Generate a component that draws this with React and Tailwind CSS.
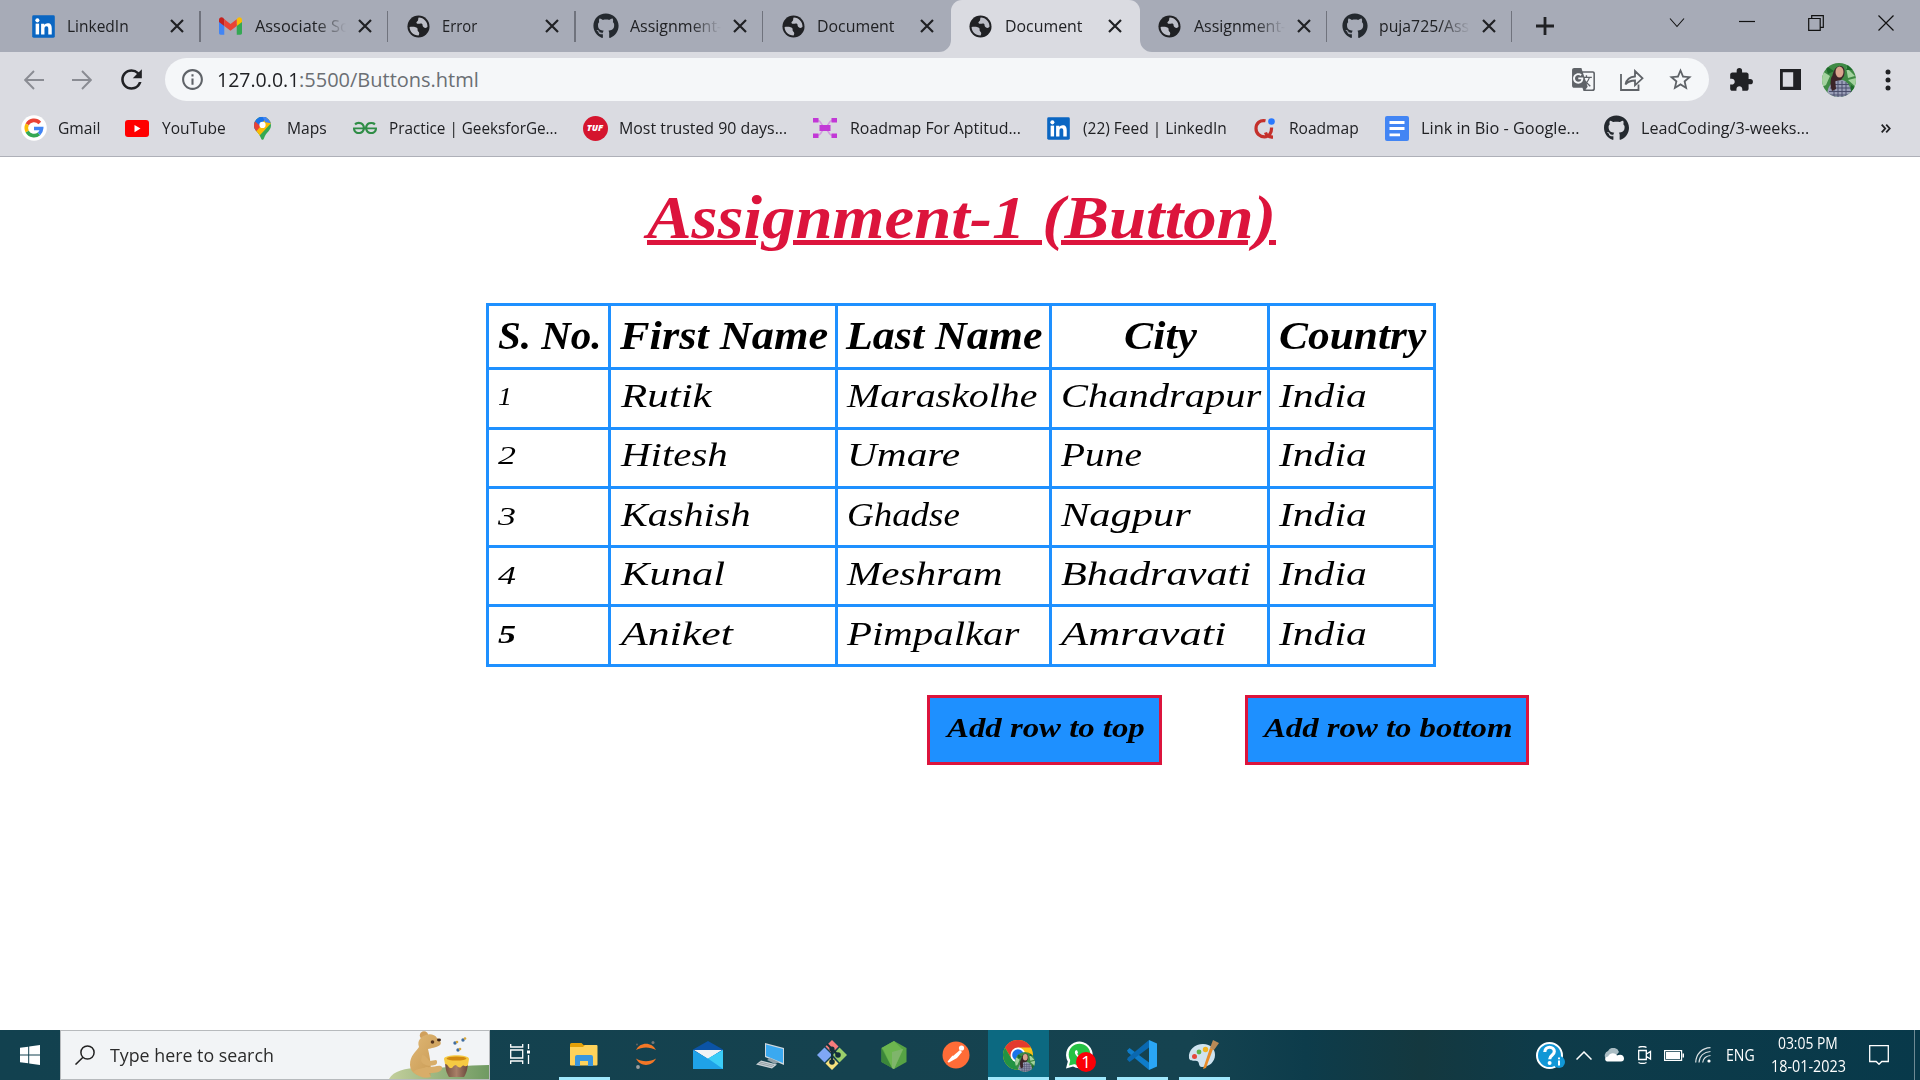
import { useLayoutEffect, useRef, useState } from "react";
import { FaGithub, FaWhatsapp } from "react-icons/fa";
import { MdExtension, MdGTranslate, MdStarBorder, MdRefresh, MdOutlineInfo } from "react-icons/md";
import { SiGeeksforgeeks } from "react-icons/si";

/* Text stretched or condensed horizontally to occupy exactly `w` pixels. */
function Fit({ w, children, className = "" }) {
  const ref = useRef(null);
  const [scale, setScale] = useState(1);
  useLayoutEffect(() => {
    setScale(w / ref.current.offsetWidth);
  }, [w]);
  return (
    <span className={"inline-block shrink-0 whitespace-nowrap " + className} style={{ width: w }}>
      <span ref={ref} className="inline-block origin-left" style={{ transform: `scaleX(${scale})` }}>
        {children}
      </span>
    </span>
  );
}

function Globe() {
  return (
    <svg viewBox="0 0 24 24" className="size-[23px]">
      <circle cx="12" cy="12" r="11.5" fill="#202124" />
      <path d="M2.700 12.500c2.700-.6 6.300-.3 7.700.9 1.500 1.300-.1 2.800 1.300 3.700 1.300.8 1.400 2.300.4 4.300C6.500 21.300 2.800 17.500 2.700 12.500z" fill="#bcbec7" />
      <path d="M12.300 2.600c5.300.2 9.300 4.600 9.100 9.700-1.100 1.700-2.900 1.300-4.300.1-1.600-1.400-.1-2.300-1.500-3.300-1.500-1-4.300 1-5.500-.6-1-1.400 1.200-1.900 1.500-3.400.2-.9-.1-1.600.7-2.500z" fill="#bcbec7" />
    </svg>
  );
}

function LinkedIn() {
  return (
    <svg viewBox="0 0 24 24" className="size-[23px]">
      <rect x=".2" y=".2" width="23.600" height="23.600" rx="1.500" fill="#0a66c2" />
      <g fill="#fff">
        <circle cx="5.600" cy="5.600" r="2.100" />
        <rect x="3.800" y="9" width="3.600" height="11.300" />
        <path d="M9.500 9h3.400v1.600c.6-1.100 1.900-1.900 3.500-1.900 3.300 0 4.200 2.200 4.200 5.200v6.400h-3.600v-5.700c0-1.400-.3-2.800-1.900-2.800-1.700 0-2.100 1.300-2.100 2.800v5.700H9.500z" />
      </g>
    </svg>
  );
}

function GmailIcon() {
  return (
    <svg viewBox="0 0 24 18" className="h-[18px] w-[23px]">
      <path d="M0 3v13.300C0 17.300.7 18 1.700 18h3.800V7z" fill="#4285f4" />
      <path d="M24 3v13.300c0 1-.7 1.700-1.700 1.700h-3.800V7z" fill="#34a853" />
      <path d="M18.500 2v7L24 4.700V2.500C24 .3 21.500-.8 19.700.5z" fill="#fbbc04" />
      <path d="M0 2.500v2.200L5.500 9V2L4.300.5C2.500-.8 0 .3 0 2.500z" fill="#c5221f" />
      <path d="M5.500 2v7l6.500 5 6.500-5V2L12 7z" fill="#ea4335" />
    </svg>
  );
}

const Github = () => <FaGithub className="size-[26px] text-[#24292f]" />;

const tabs = [
  { icon: <LinkedIn />, label: "LinkedIn", w: 62 },
  { icon: <GmailIcon />, label: "Associate So", w: 95, fade: true },
  { icon: <Globe />, label: "Error", w: 35 },
  { icon: <Github />, label: "Assignment-", w: 92, fade: true },
  { icon: <Globe />, label: "Document", w: 77 },
  { icon: <Globe />, label: "Document", w: 77, active: true },
  { icon: <Globe />, label: "Assignment-", w: 92, fade: true },
  { icon: <Github />, label: "puja725/Ass", w: 90, fade: true, last: true },
];

function Cross() {
  return (
    <svg viewBox="0 0 14 14" className="size-[14px]" stroke="#202124" strokeWidth="2.200">
      <path d="M1 1l12 12M13 1L1 13" />
    </svg>
  );
}

function Tab({ t, sep }) {
  return (
    <div
      className={
        "relative flex h-[52px] shrink-0 items-center " +
        (t.last ? "w-[185.200px] " : t.active ? "w-[189px] " : "w-[187.500px] ") +
        (t.active ? "rounded-t-[11px] bg-[#dadbe1]" : "")
      }
    >
      {t.active && (
        <>
          <svg className="absolute bottom-0 -left-[12px] size-[12px]" viewBox="0 0 12 12"><path d="M12 0v12H0A12 12 0 0 0 12 0z" fill="#dadbe1" /></svg>
          <svg className="absolute -right-[12px] bottom-0 size-[12px]" viewBox="0 0 12 12"><path d="M0 0v12h12A12 12 0 0 1 0 0z" fill="#dadbe1" /></svg>
        </>
      )}
      <div className={"flex w-[28px] justify-center " + (t.last ? "ml-[14px]" : "ml-[16px]")}>{t.icon}</div>
      <div
        className={
          "ml-[10px] w-[97px] text-[16.500px] leading-[26px] text-[#202124] " +
          (t.fade ? "[mask-image:linear-gradient(to_right,black_62%,transparent_94%)]" : "")
        }
      >
        <Fit w={t.w}>{t.label}</Fit>
      </div>
      <div className="ml-[6px]"><Cross /></div>
      {sep && <div className="ml-auto h-[31px] w-[1.500px] bg-[#70737d]" />}
    </div>
  );
}

function TabStrip() {
  return (
    <div className="flex h-[52px] bg-[#a7abb7] pl-[13px]">
      {tabs.map((t, i) => (
        <Tab key={i} t={t} sep={i !== 4 && i !== 5} />
      ))}
      <svg viewBox="0 0 18 18" className="mt-[17px] ml-[24px] size-[18px]" stroke="#202124" strokeWidth="2.800"><path d="M9 0v18M0 9h18" /></svg>
      <div className="mt-[15px] ml-auto flex h-[16px] w-[251px] justify-between pr-[26px]">
        <svg viewBox="0 0 16 16" className="size-[16px]" fill="none" stroke="#111" strokeWidth="1.100"><path d="M1 3.500l7 8 7-8" /></svg>
        <svg viewBox="0 0 16 16" className="size-[16px]" stroke="#111" strokeWidth="1.200"><path d="M0 6.500h16" /></svg>
        <svg viewBox="0 0 16 16" className="size-[16px]" fill="none" stroke="#111" strokeWidth="1.200"><path d="M.7 3.500h11.500v11.800H.7zM3.700 3.500V.7h11.600v11.600h-3.100" /></svg>
        <svg viewBox="0 0 16 16" className="size-[16px]" stroke="#111" strokeWidth="1.200"><path d="M.5.500l15 15M15.500.5l-15 15" /></svg>
      </div>
    </div>
  );
}

function AvatarArt({ className }) {
  return (
    <svg viewBox="0 0 34 34" className={className}>
      <clipPath id="av"><circle cx="17" cy="17" r="17" /></clipPath>
      <g clipPath="url(#av)">
        <rect width="34" height="34" fill="#3f8a45" />
        <path d="M0 8l8 5-4 9-4 2zM24 4l9 9-7 2zM26 17l8-2v9z" fill="#a3d29e" />
        <path d="M3 2l9 6-6 3zM26 0l7 7-9 0zM29 22l5 3-6 5z" fill="#1d6b2a" />
        <path d="M10 30c-2-9 0-23 5-26 6-3 9 2 7 9l-3 4-4 2-2 12z" fill="#3b2428" />
        <ellipse cx="17.500" cy="9" rx="4" ry="5.500" fill="#d9a58e" />
        <path d="M5 34c0-9 3-14 9-16l6-1c6 1 9 7 10 17z" fill="#9a9fb8" />
        <path d="M9 21.500h18M8 25h21M7 28.500h23M7 32h23M12 19v15M16 18v16M20 18v16M24 19v15" stroke="#4b4f6c" strokeWidth="1" />
        <path d="M10 13c-2 4-2 10 0 15l4-2-1-11z" fill="#3b2428" />
      </g>
    </svg>
  );
}

function AddressBar() {
  return (
    <div className="flex h-[55px] items-center bg-[#dadbe1]">
      <svg viewBox="0 0 20 20" className="ml-[24px] size-[20px]" fill="none" stroke="#8a8c93" strokeWidth="1.900"><path d="M20 10H1.500M10 1L1.200 10l8.800 9" /></svg>
      <svg viewBox="0 0 20 20" className="ml-[28px] size-[20px]" fill="none" stroke="#8a8c93" strokeWidth="1.900"><path d="M0 10h18.500M10 1l8.800 9-8.800 9" /></svg>
      <MdRefresh className="ml-[24px] size-[31px] text-[#202124]" />
      <div className="ml-[18px] flex h-[43px] w-[1544px] items-center rounded-full bg-[#f5f7f9]">
        <MdOutlineInfo className="ml-[15px] size-[25px] text-[#5f6368]" />
        <div className="ml-[12px] flex text-[20px] leading-[30px]">
          <Fit w={82} className="text-[#202124]">127.0.0.1</Fit>
          <Fit w={180} className="text-[#6b6f74]">:5500/Buttons.html</Fit>
        </div>
        <MdGTranslate className="ml-auto size-[25px] text-[#5f6368]" />
        <svg viewBox="0 0 24 22" className="ml-[24px] h-[22px] w-[24px]" fill="none" stroke="#5f6368" strokeWidth="1.800">
          <path d="M1 5v16h17.500v-5.500M5.500 15.500c1-5 4-7.700 9.500-8V2l7.500 7.300-7.500 7v-4.800c-4.200 0-7 1-9.500 4z" />
        </svg>
        <MdStarBorder className="mr-[15px] ml-[23px] size-[27px] text-[#5f6368]" />
      </div>
      <MdExtension className="ml-[19px] size-[26px] text-[#202124]" />
      <svg viewBox="0 0 21 21" className="ml-[26px] size-[21px]"><path fillRule="evenodd" d="M0 0h21v21H0zM2.800 3.200v14.600h10.400V3.200z" fill="#202124" /></svg>
      <AvatarArt className="ml-[21px] size-[34px]" />
      <svg viewBox="0 0 6 22" className="ml-[29px] h-[22px] w-[6px]" fill="#202124"><circle cx="3" cy="3" r="2.500" /><circle cx="3" cy="11" r="2.500" /><circle cx="3" cy="19" r="2.500" /></svg>
    </div>
  );
}

const GoogleIcon = () => (
  <svg viewBox="0 0 26 26" className="size-[26px]">
    <circle cx="13" cy="13" r="12.800" fill="#fff" />
    <g fill="none" strokeWidth="3.600">
      <path d="M18.800 8A7.700 7.700 0 0 0 6.200 9.400" stroke="#ea4335" />
      <path d="M6.200 9.400a7.700 7.700 0 0 0 0 7.200" stroke="#fbbc05" />
      <path d="M6.200 16.600A7.700 7.700 0 0 0 18 18.800" stroke="#34a853" />
      <path d="M18 18.800a7.700 7.700 0 0 0 2.600-5.300H13" stroke="#4285f4" />
    </g>
  </svg>
);
const YoutubeIcon = () => (
  <svg viewBox="0 0 24 17" className="h-[17px] w-[24px]"><rect width="24" height="17" rx="3" fill="#f00" /><path d="M9.500 5v7.200l6-3.600z" fill="#fff" /></svg>
);
const MapsIcon = () => (
  <svg viewBox="0 0 18 25" className="h-[25px] w-[18px]">
    <clipPath id="pin"><path d="M9 0a9 9 0 0 1 9 9c0 6-5.500 7.500-7.500 14-.5 2-2.500 2-3 0C5.500 16.500 0 15 0 9a9 9 0 0 1 9-9z" /></clipPath>
    <g clipPath="url(#pin)">
      <rect width="18" height="25" fill="#34a853" />
      <path d="M0 15L13 0h5v7L4 22z" fill="#fbbc04" />
      <path d="M0 0h14L2 15H0z" fill="#1a73e8" />
      <path d="M0 4l7 6-5 6H0z" fill="#ea4335" />
      <path d="M9 0h9v7l-6-1z" fill="#4285f4" />
      <circle cx="9" cy="8.700" r="3.300" fill="#fff" />
    </g>
  </svg>
);
const TufIcon = () => (
  <span className="flex size-[25px] items-center justify-center rounded-full bg-[#d5152e] text-[9px] font-extrabold text-white italic">TUF</span>
);
const NodesIcon = () => (
  <svg viewBox="0 0 24 20" className="h-[20px] w-[24px]">
    <path d="M4 2c5 1 5 7 8 8 3-1 3-7 8-8M4 18c5-1 5-7 8-8 3 1 3 7 8 8" fill="none" stroke="#d29adf" strokeWidth="1.500" />
    <path d="M0 0h5.500v4.500H0zM18.500 0H24v4.500h-5.500zM0 15.500h5.500V20H0zM18.500 15.500H24V20h-5.500zM6.500 7h11v6h-11z" fill="#c238d6" />
  </svg>
);
const RoadmapIcon = () => (
  <svg viewBox="0 0 21 21" className="size-[21px]"><path d="M11.500 2.800C6 1.500 2 5.500 2 10.500c0 5 3.800 8.300 8.500 8.300 4.500 0 7.300-3.500 7-9.300M11.500 14.500c1 3 4 4.700 7.500 4.700" fill="none" stroke="#c4302b" strokeWidth="3.200" /><circle cx="17.500" cy="3.500" r="3.300" fill="#2979ff" /></svg>
);
const DocsIcon = () => (
  <svg viewBox="0 0 24 25" className="h-[25px] w-[24px]"><rect width="24" height="25" rx="2" fill="#4285f4" /><path d="M4.500 6.500h15M4.500 12.500h15M4.500 18.800h10.500" stroke="#fff" strokeWidth="2.800" /></svg>
);

const bookmarks = [
  { icon: <GoogleIcon />, ml: 20.5, iw: 26, gap: 11.5, label: "Gmail", w: 42 },
  { icon: <YoutubeIcon />, ml: 25, iw: 24, gap: 13, label: "YouTube", w: 64 },
  { icon: <MapsIcon />, ml: 28, iw: 17, gap: 16, label: "Maps", w: 40 },
  { icon: <SiGeeksforgeeks className="size-[24px] text-[#2f8d46]" />, ml: 26, iw: 24, gap: 12, label: "Practice | GeeksforGe...", w: 169 },
  { icon: <TufIcon />, ml: 24.5, iw: 25, gap: 11.5, label: "Most trusted 90 days...", w: 168 },
  { icon: <NodesIcon />, ml: 25.5, iw: 24, gap: 13, label: "Roadmap For Aptitud...", w: 171 },
  { icon: <LinkedIn />, ml: 26, iw: 23, gap: 13, label: "(22) Feed | LinkedIn", w: 144 },
  { icon: <RoadmapIcon />, ml: 27.5, iw: 21, gap: 13.5, label: "Roadmap", w: 70 },
  { icon: <DocsIcon />, ml: 26, iw: 24, gap: 12, label: "Link in Bio - Google...", w: 158 },
  { icon: <Github />, ml: 25, iw: 25, gap: 12, label: "LeadCoding/3-weeks...", w: 168 },
];

function Bookmarks() {
  return (
    <div className="flex h-[50px] items-center border-b-[1.500px] border-[#aeb0b8] bg-[#dadbe1] pb-[7px]">
      {bookmarks.map((b) => (
        <div key={b.label} className="flex shrink-0 items-center" style={{ marginLeft: b.ml }}>
          <div className="flex shrink-0 items-center justify-center" style={{ width: b.iw, marginRight: b.gap }}>{b.icon}</div>
          <Fit w={b.w} className="text-[16px] leading-[24px] text-[#202124]">{b.label}</Fit>
        </div>
      ))}
      <svg viewBox="0 0 10 9" className="mr-[29px] ml-auto h-[9px] w-[10px]" fill="none" stroke="#202124" strokeWidth="1.800"><path d="M.7.700l3.500 3.800L.7 8.300M5.200.700l3.500 3.800-3.500 3.800" /></svg>
    </div>
  );
}

const headers = [["S. No.", 104, 9], ["First Name", 208, 9], ["Last Name", 196, 8], ["City", 73, 72], ["Country", 147, 9]];
const rows = [
  ["1", ["Rutik", 91], ["Maraskolhe", 190], ["Chandrapur", 200]],
  ["2", ["Hitesh", 107], ["Umare", 113], ["Pune", 81]],
  ["3", ["Kashish", 130], ["Ghadse", 113], ["Nagpur", 130]],
  ["4", ["Kunal", 104], ["Meshram", 155], ["Bhadravati", 190]],
  ["5", ["Aniket", 112], ["Pimpalkar", 173], ["Amravati", 166]],
];
const heights = ["h-[60px]", "h-[59px]", "h-[59px]", "h-[59px]", "h-[60px]"];
const lower = { 3: true, 4: true, 5: true };
const cell = "flex items-center border-r-[3px] border-b-[3px] border-[#1e90ff] ";
const columns = "grid grid-cols-[122px_227px_214px_218px_166px] ";

function PeopleTable() {
  return (
    <div className="ml-[486px] w-[950px] border-t-[3px] border-l-[3px] border-[#1e90ff] text-black italic">
      <div className={columns + "h-[64px] text-[39px] leading-[44px] font-bold"}>
        {headers.map(([h, w, pl]) => (
          <div key={h} className={cell + "pb-[1px]"} style={{ paddingLeft: pl }}><Fit w={w}>{h}</Fit></div>
        ))}
      </div>
      {rows.map(([n, f, l, c], i) => {
        const c2 = cell + (i < 2 ? "pb-[6px] " : "pb-[4px] ");
        return (
          <div key={n} className={columns + heights[i] + " text-[34px] leading-[40px]"}>
            <div className={cell + "pl-[9px] text-[26px] " + (lower[n] ? "pb-[1px]" : "pb-[4px]") + (n === "5" ? " font-bold" : "")}>
              <Fit w={n === "1" ? 14 : 18}>{n}</Fit>
            </div>
            <div className={c2 + "pl-[10px]"}><Fit w={f[1]}>{f[0]}</Fit></div>
            <div className={c2 + "pl-[9px]"}><Fit w={l[1]}>{l[0]}</Fit></div>
            <div className={c2 + "pl-[9px]"}><Fit w={c[1]}>{c[0]}</Fit></div>
            <div className={c2 + "pl-[9px]"}><Fit w={88}>India</Fit></div>
          </div>
        );
      })}
    </div>
  );
}

function Page() {
  return (
    <main className="h-[873px] bg-white font-['Liberation_Serif',serif]">
      <h1 className="ml-[647px] pt-[15px] text-[62px] leading-[90px] font-bold text-[#dc143c] italic">
        <Fit w={629} className="h-[72px] align-top">
          <span className="underline decoration-[5px] underline-offset-[2px]">Assignment-1 (Button)</span>
        </Fit>
      </h1>
      <div className="pt-[41px]"><PeopleTable /></div>
      <div className="mt-[28px] ml-[927px] flex gap-[83px] text-[28px] leading-[36px] font-bold text-black italic">
        <button className="flex h-[70px] w-[235px] items-center justify-center border-[3px] border-[#dc143c] bg-[#1e90ff] pb-[4px] pl-[2px]">
          <Fit w={198} className="text-left">Add row to top</Fit>
        </button>
        <button className="flex h-[70px] w-[284px] items-center justify-center border-[3px] border-[#dc143c] bg-[#1e90ff] pb-[4px] pl-[2px]">
          <Fit w={248} className="text-left">Add row to bottom</Fit>
        </button>
      </div>
    </main>
  );
}

function Bear() {
  return (
    <svg viewBox="0 0 100 48" className="mt-auto ml-auto h-[48px] w-[100px]">
      <defs>
        <linearGradient id="hill" x1="0" x2="1"><stop offset="0" stopColor="#c3cf9c" /><stop offset="1" stopColor="#6f9a62" /></linearGradient>
        <linearGradient id="fur" x1="0" x2="1" y1="0" y2="1"><stop offset="0" stopColor="#e0b876" /><stop offset="1" stopColor="#c69750" /></linearGradient>
        <linearGradient id="pot" x1="0" x2="1"><stop offset="0" stopColor="#75503f" /><stop offset=".5" stopColor="#a98068" /><stop offset="1" stopColor="#68483b" /></linearGradient>
      </defs>
      <path d="M0 48c5-9 20-12 36-11 25 0 40-3 64-3v14z" fill="url(#hill)" />
      <circle cx="35" cy="4.500" r="4.200" fill="#d0a05d" />
      <path d="M31 8c5-6 14-6 17-1 3 2 5 5 3 7-4 3-9 3-12 4 2 8 4 20 2 28-10 0-20-3-20-12 0-10 6-13 9-18-1-3-1-6 1-8z" fill="url(#fur)" />
      <path d="M33 24c4 0 6 5 8 6l6-1c2 1 1 5-1 5-6 2-12 0-14-4zM24 41c4-4 9-3 13-5 8 1 13-3 16 0 1 5-6 6-13 6l2 4c-6 2-12 0-18-5z" fill="#d8ad69" />
      <circle cx="43.500" cy="11" r="1.800" fill="#55351f" /><ellipse cx="50" cy="9" rx="2" ry="1.400" fill="#3b2418" />
      <path d="M56 30h23c0 8-2 13-4 16H60c-2-3-4-8-4-16z" fill="url(#pot)" />
      <path d="M55 28c0-5 25-5 25 0l-1 6c-3 3-4-1-6 1-2 3-4 1-6-1-3 0-3 4-6 3-2-1-2-4-5-4z" fill="#f6cb43" />
      <ellipse cx="67.500" cy="27.500" rx="10" ry="2" fill="#d18a12" />
      <g><circle cx="66" cy="12" r="1.700" fill="#3f6ca0" /><circle cx="68" cy="11" r="1.300" fill="#d8a83c" /><circle cx="74" cy="9" r="1.700" fill="#3f6ca0" /><circle cx="76" cy="7.500" r="1.300" fill="#d8a83c" /><circle cx="69" cy="19" r="1.700" fill="#3f6ca0" /><circle cx="71" cy="18" r="1.300" fill="#d8a83c" /></g>
    </svg>
  );
}

const svg30 = "size-[30px]";
const apps = [
  {
    open: true, icon: (
      <svg viewBox="0 0 30 30" className={svg30}><path d="M1 4.500Q1 3 2.500 3h10l2 2H28v20H1z" fill="#e3a008" /><path d="M1 7h13l2-2h11.500q1 0 1 1v18.500q0 1-1 1H2q-1 0-1-1z" fill="#ffd25a" /><path d="M6 26V17q0-2 2-2h14q2 0 2 2v9h-5v-5h-8v5z" fill="#3a96dd" /></svg>
    ),
  },
  {
    icon: (
      <svg viewBox="0 0 30 30" className={svg30}><path d="M5 10C9 1.500 21 1.500 25 10 19 6.500 11 6.500 5 10zM5 18.500C9 27 21 27 25 18.500c-6 3.500-14 3.500-20 0z" fill="#f37726" /><circle cx="22" cy="2.500" r="1.500" fill="#767677" /><circle cx="7" cy="27" r="1.900" fill="#9e9e9e" /><circle cx="6" cy="4.500" r="1" fill="#616262" /></svg>
    ),
  },
  {
    icon: (
      <svg viewBox="0 0 30 30" className={svg30}><path d="M0 9.500L15 1l15 8.500V15H0z" fill="#0b53a5" /><path d="M1 10h28l-14 9z" fill="#f1f3f5" /><path d="M0 10l15 8.500L30 10v19H0z" fill="#1fa2e8" /><path d="M2 10h26l-13 8.500z" fill="#f1f3f5" /><path d="M30 10v19L15 18.500z" fill="#3bcdf7" /></svg>
    ),
  },
  {
    icon: (
      <svg viewBox="0 0 30 30" className={svg30}><path d="M10 3l19 5v17L10 17z" fill="#cfd8dd" /><path d="M11 4.500L28 9v14l-17-7z" fill="#3aa9f0" /><path d="M15 18l9 4-4 2-8-4z" fill="#8fa0a8" /><path d="M6 20.500l16 4-5 4-16-4z" fill="#cbd3d7" /><path d="M5 22l14 3.500M3.500 23.300l14 3.500" stroke="#7d8a90" strokeWidth=".7" /></svg>
    ),
  },
  {
    icon: (
      <svg viewBox="0 0 30 30" className={svg30}><path d="M15 0l6.500 6.500L15 13l-6.500-6.500z" fill="#f67c7c" /><path d="M7.500 7.500L14 14v2l-6.500 6.500L0 15z" fill="#7fa7f5" /><path d="M22.500 7.500L30 15l-7.500 7.500L16 15z" fill="#9bcf6b" /><path d="M15 17l6.500 6.500L15 30l-6.500-6.500z" fill="#f7e07c" /><path d="M10 4l5 5v14M15 9l6 6" fill="none" stroke="#14303a" strokeWidth="2" /><g fill="#14303a"><circle cx="15" cy="9" r="2.600" /><circle cx="15" cy="22" r="2.800" /><circle cx="21" cy="15" r="2.800" /></g></svg>
    ),
  },
  {
    icon: (
      <svg viewBox="0 0 30 30" className={svg30}><path d="M15 1l12.500 7v14L15 29 2.500 22V8z" fill="#57a345" /><path d="M15 1L2.500 8l2 2L13 28l2 1 9-19z" fill="#6cb64f" /><path d="M2.500 8L13 28 2.500 22z" fill="#3c873a" /><path d="M13 12l11-3-9 20-2-1z" fill="#7fb56b" /></svg>
    ),
  },
  {
    icon: (
      <svg viewBox="0 0 30 30" className={svg30}><circle cx="15" cy="15" r="13.500" fill="#ff6c37" /><circle cx="20.500" cy="8" r="2.600" fill="#fff" /><path d="M19 10l2 2-5 6-8 4.500-1-.5 5-6z" fill="#fff" /><path d="M12 16l-5 6" stroke="#fff" strokeWidth="1.200" /></svg>
    ),
  },
  {
    open: true, active: true, icon: (
      <span className="relative block size-[30px]">
        <svg viewBox="0 0 30 30" className={svg30}>
          <circle cx="15" cy="15" r="15" fill="#fbc116" />
          <path d="M2 7.500A15 15 0 0 1 28 7.500H15l-6.500 11z" fill="#e33b2e" />
          <path d="M2 7.500L8.500 18.700 15 22.500h6.500L14.500 30A15 15 0 0 1 2 7.500z" fill="#229342" />
          <circle cx="15" cy="15" r="7.500" fill="#fff" /><circle cx="15" cy="15" r="5.800" fill="#1a73e8" />
        </svg>
        <AvatarArt className="absolute top-[12px] left-[12px] size-[20px]" />
      </span>
    ),
  },
  {
    open: true, icon: (
      <span className="relative block size-[30px]">
        <svg viewBox="0 0 30 30" className={svg30}><path d="M1 28.500l1.800-7A13.300 13.300 0 1 1 8 26.600z" fill="#fff" /><circle cx="14.500" cy="14.500" r="10.800" fill="#25c244" /><path d="M4 25.500l1.500-6 4.500 4.500z" fill="#25c244" /></svg>
        <FaWhatsapp className="absolute top-[4px] left-[4px] size-[21px] text-[#fff] [clip-path:circle(32%)]" />
        <span className="absolute top-[12px] left-[11px] flex size-[20px] items-center justify-center rounded-full bg-[#fb0007] text-[17px] leading-[20px] text-white">1</span>
      </span>
    ),
  },
  {
    open: true, icon: (
      <svg viewBox="0 0 30 30" className={svg30}><path d="M0 10.500L2.500 8 22 22.500V30L1 12.500z" fill="#0f7cc9" /><path d="M0 19.500L2.500 22 22 7.500V0L1 17.500z" fill="#0a68b0" /><path d="M22 0l8 3.500v23L22 30z" fill="#2aa6f5" /></svg>
    ),
  },
  {
    open: true, icon: (
      <svg viewBox="0 0 32 32" className="size-[32px]"><path d="M15 5c8 0 12 5 12 11 0 7-6 12-13 12-4 0-2-5-5-6s-7 1-8-3C0 11 7 5 15 5z" fill="#cfe3ef" /><circle cx="6.500" cy="17.500" r="2.500" fill="#e5483d" /><circle cx="11" cy="13" r="2.400" fill="#5fb34b" /><circle cx="17.500" cy="10.500" r="2.700" fill="#f0b323" /><path d="M25 10l-7 19-3 1 7-21z" fill="#e88b28" /><path d="M22 9l3-8 6 3-5 7z" fill="#b98a56" /></svg>
    ),
  },
];

function Taskbar() {
  return (
    <footer className="flex h-[50px] bg-[linear-gradient(90deg,#12414f_0%,#15424f_45%,#154350_62%,#0d3c4b_68%,#14383f_74%,#0e3b49_80%,#08394a_100%)] text-white">
      <div className="flex w-[60px] items-center justify-center">
        <svg viewBox="0 0 20 20" className="size-[20px]" fill="#fff"><path d="M0 2.800L8.200 1.700v7.800H0zM9.200 1.500L20 0v9.500H9.200zM0 10.500h8.200v7.800L0 17.200zM9.200 10.500H20V20L9.200 18.500z" /></svg>
      </div>
      <div className="flex w-[430px] items-center border border-[#b7babd] bg-[#f2f4f6] pl-[14px]">
        <svg viewBox="0 0 20 20" className="size-[20px]" fill="none" stroke="#222" strokeWidth="1.500"><circle cx="12.500" cy="7.500" r="6.600" /><path d="M8 12.200L.5 19.600" /></svg>
        <Fit w={164} className="ml-[15px] text-[19px] leading-[26px] text-[#2b2b2b]">Type here to search</Fit>
        <Bear />
      </div>
      <div className="flex w-[60px] items-center justify-center pb-[2px]">
        <svg viewBox="0 0 20 20" className="size-[20px]" fill="none" stroke="#fff" strokeWidth="1.300"><path d="M.7 0v3h12V0M.7 20v-3h12v3M.7 6h12v8H.700zM18.500 0v5M18.500 11v9" /><path d="M17 6.500h3v3h-3z" fill="#fff" stroke="none" /></svg>
      </div>
      <div className="flex pl-[3px]">
        {apps.map((a, i) => (
          <div key={i} className="flex h-[50px] w-[62px] flex-col items-center">
            <div className={"flex h-[47px] items-center justify-center pt-[3px] " + (a.active ? "w-[61px] bg-[#0c6981]" : "w-[51px]")}>{a.icon}</div>
            <div className={"h-[3px] " + (a.active ? "w-[61px] " : "w-[51px] ") + (a.open ? "bg-[#a0e8fc]" : "")} />
          </div>
        ))}
      </div>
      <div className="ml-auto flex h-[50px] items-center">
        <svg viewBox="0 0 29 28" className="mt-[2px] h-[28px] w-[29px]">
          <circle cx="13.500" cy="13.500" r="12.500" fill="#1197d6" stroke="#fff" strokeWidth="2" />
          <path d="M8.800 10c0-6.500 9.700-6 9.500-.4 0 3.800-4.600 3.600-4.600 7.600" fill="none" stroke="#fff" strokeWidth="3.200" /><circle cx="13.600" cy="21" r="2" fill="#fff" />
          <circle cx="23" cy="20" r="6" fill="#1197d6" /><path d="M23 18.500v5M23 15.500v1.800" stroke="#fff" strokeWidth="2" />
        </svg>
        <svg viewBox="0 0 16 9" className="ml-[11px] h-[9px] w-[16px]" fill="none" stroke="#fff" strokeWidth="1.500"><path d="M.5 8.500L8 1l7.500 7.500" /></svg>
        <svg viewBox="0 0 20 14" className="ml-[12px] h-[14px] w-[20px]"><path d="M2 11A5 5 0 0 1 4 3a6 6 0 0 1 11 1l-6 7z" fill="#a9bcc3" /><path d="M3 13.500c-3-1-2-5 1-5 2-4 7-4 9-1 4-2 7 0 7 3 0 2-1 3-3 3z" fill="#fff" /></svg>
        <svg viewBox="0 0 15 18" className="ml-[13px] h-[18px] w-[15px]" fill="none" stroke="#fff" strokeWidth="1.300"><path d="M1.700 4.500h7.600v9H1.700zM9.500 8l4-2.500v7.500l-4-2.500M1.500 1.500c2-1.300 6-1.300 8 0M1.500 16.500c2 1.300 6 1.300 8 0" /></svg>
        <svg viewBox="0 0 20 11" className="ml-[12px] h-[11px] w-[20px]"><path d="M.6.600h17v9.800H.6z" fill="none" stroke="#fff" strokeWidth="1.200" /><path d="M2 2h14v7H2zM18.500 3.500H20v4h-1.500z" fill="#fff" /></svg>
        <svg viewBox="0 0 16 16" className="ml-[11px] size-[16px]" fill="none" stroke="#fff" strokeWidth="1.200"><path d="M.7 15.500C1 7 7 1 15.500.7M4 15.500C4.500 9 9 5 15.500 4.500M7.700 15.500C8 11.500 11.500 8.700 15.500 8.500" opacity=".85" /><circle cx="14" cy="14" r="1.600" fill="#fff" stroke="none" /></svg>
        <Fit w={29} className="ml-[15px] text-[16px] leading-[24px]">ENG</Fit>
        <div className="ml-[15px] flex w-[76px] flex-col items-center pb-[1px] text-[15.500px] leading-[23px]">
          <Fit w={60}>03:05 PM</Fit>
          <Fit w={75}>18-01-2023</Fit>
        </div>
        <svg viewBox="0 0 20 20" className="mr-[25px] ml-[23px] size-[20px]" fill="none" stroke="#fff" strokeWidth="1.300"><path d="M.7.700h18.600v15.800h-6.500L10 19.300 7.200 16.500H.7z" /></svg>
        <div className="mr-[5px] h-[50px] w-px bg-[#6d8a94]" />
      </div>
    </footer>
  );
}

export default function App() {
  return (
    <div className="flex h-[1080px] w-[1920px] flex-col overflow-hidden bg-white font-['Open_Sans',sans-serif]">
      <TabStrip />
      <AddressBar />
      <Bookmarks />
      <Page />
      <Taskbar />
    </div>
  );
}
